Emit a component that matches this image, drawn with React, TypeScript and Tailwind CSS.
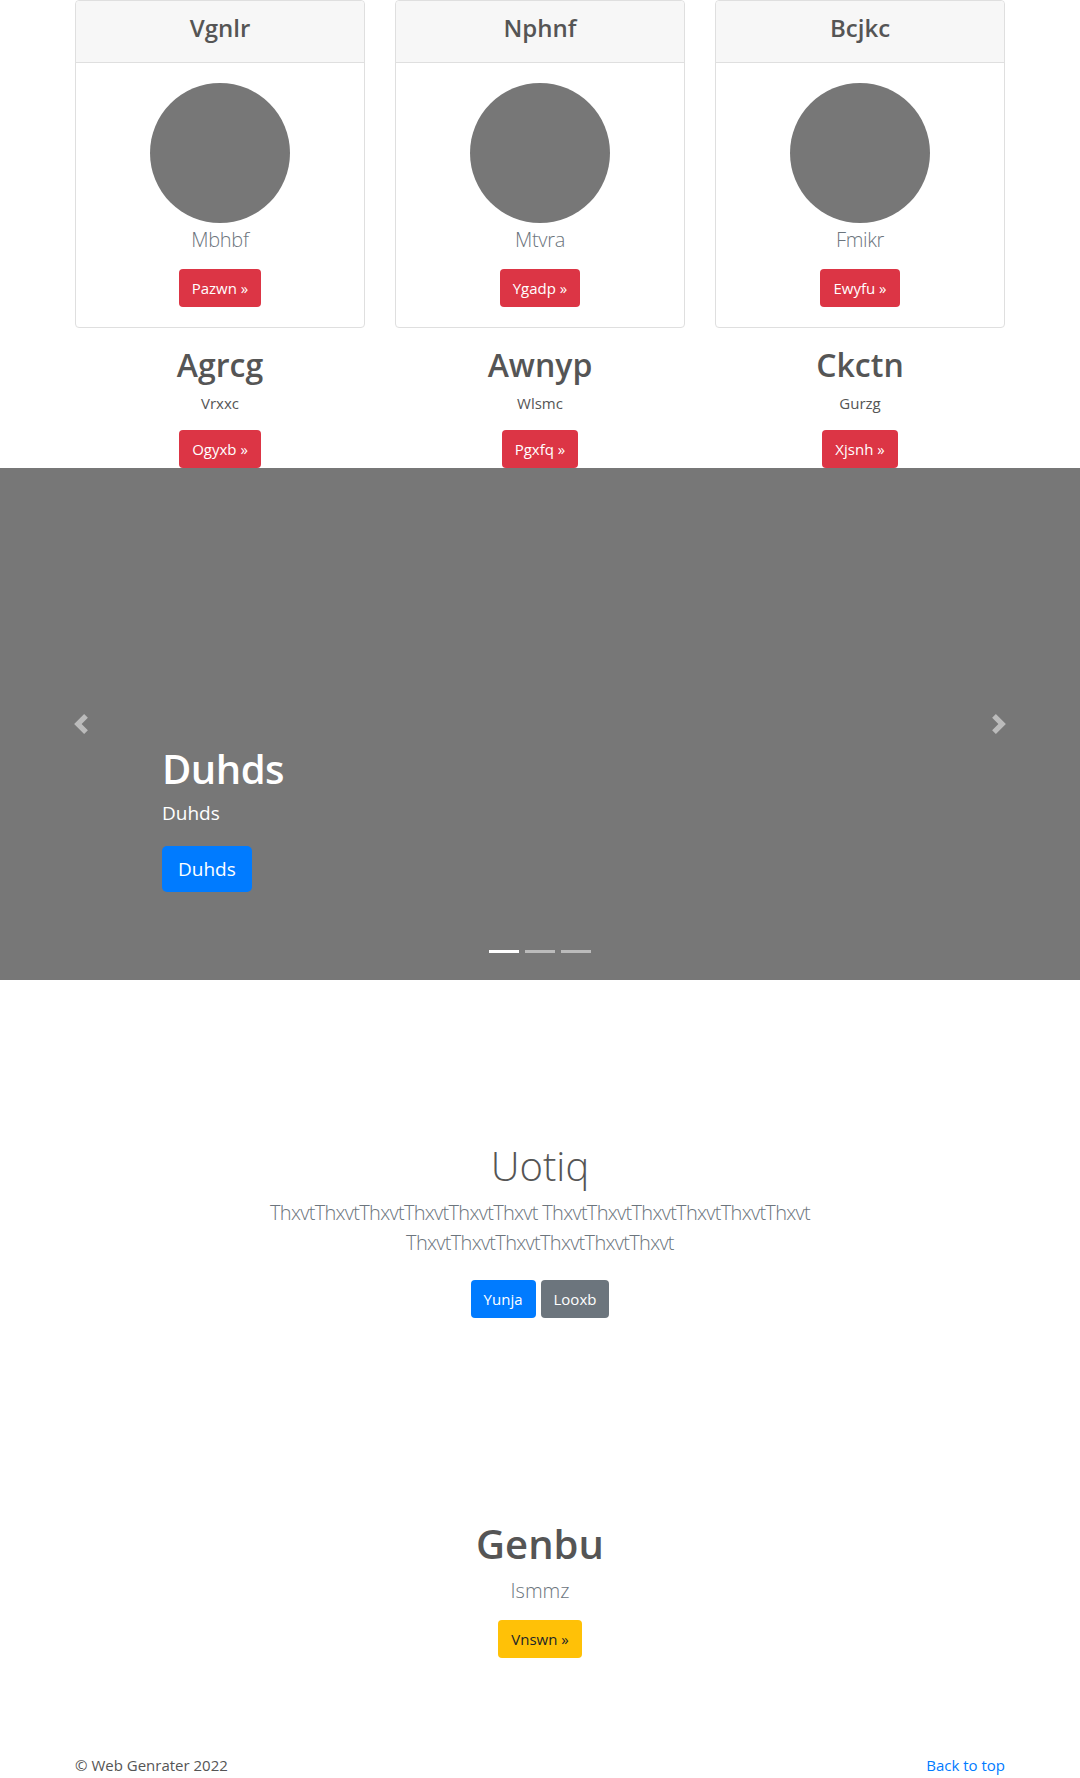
const font = { fontFamily: '"Open Sans", "Noto Sans", sans-serif' };

const cards = [
  { title: 'Vgnlr', sub: 'Mbhbf', btn: 'Pazwn' },
  { title: 'Nphnf', sub: 'Mtvra', btn: 'Ygadp' },
  { title: 'Bcjkc', sub: 'Fmikr', btn: 'Ewyfu' },
];

const cols = [
  { title: 'Agrcg', sub: 'Vrxxc', btn: 'Ogyxb' },
  { title: 'Awnyp', sub: 'Wlsmc', btn: 'Pgxfq' },
  { title: 'Ckctn', sub: 'Gurzg', btn: 'Xjsnh' },
];

const words = 'ThxvtThxvtThxvtThxvtThxvtThxvt ThxvtThxvtThxvtThxvtThxvtThxvt ThxvtThxvtThxvtThxvtThxvtThxvt';

function Btn({ children, className }: { children: React.ReactNode; className: string }) {
  return (
    <a href="#" className={`inline-block px-3 py-1.5 text-[15px] leading-6 border border-transparent rounded-[4px] ${className}`}>
      {children}
    </a>
  );
}

// bootstrap 4 carousel control glyphs
function Arrow({ dir }: { dir: 'prev' | 'next' }) {
  const d = dir === 'prev' ? 'M5.25 0l-4 4 4 4 1.5-1.5-2.5-2.5 2.5-2.5-1.5-1.5z' : 'M2.75 0l-1.5 1.5 2.5 2.5-2.5 2.5 1.5 1.5 4-4-4-4z';
  return (
    <svg width="20" height="20" viewBox="0 0 8 8" className="opacity-50">
      <path d={d} fill="#fff" />
    </svg>
  );
}

export default function App() {
  return (
    <div style={font} className="bg-white text-[#555] min-h-[1778px]">
      <div className="w-[930px] mx-auto">
        <div className="grid grid-cols-3 gap-[30px]">
          {cards.map((c) => (
            <div key={c.title} className="border border-[#dfdfdf] rounded-[4px] text-center">
              <div className="bg-[#f7f7f7] border-b border-[#dfdfdf] px-5 pt-3 pb-3 rounded-t-[4px]">
                <h4 className="text-[24px] leading-[1.2] font-semibold mt-[1px] mb-[7px]">{c.title}</h4>
              </div>
              <div className="p-5">
                <div className="w-[140px] h-[140px] rounded-full bg-[#777] mx-auto" />
                <p className="text-[20px] leading-[30px] font-light tracking-[-0.3px] text-[#6c757d] mt-[2px] mb-[14px]">{c.sub}</p>
                <Btn className="bg-[#dc3545] text-white">{c.btn} »</Btn>
              </div>
            </div>
          ))}
        </div>

        <div className="grid grid-cols-3 gap-[30px] mt-[18px] text-center">
          {cols.map((c) => (
            <div key={c.title}>
              <h2 className="text-[32px] leading-[1.2] font-semibold mb-2">{c.title}</h2>
              <p className="text-[15px] leading-[22px] mb-4">{c.sub}</p>
              <Btn className="bg-[#dc3545] text-white">{c.btn} »</Btn>
            </div>
          ))}
        </div>
      </div>

      <div className="relative h-[512px] bg-[#777]">
        <a href="#" className="absolute left-0 top-0 bottom-0 w-[15%] flex items-center justify-center">
          <Arrow dir="prev" />
        </a>
        <a href="#" className="absolute right-0 top-0 bottom-0 w-[15%] flex items-center justify-center">
          <Arrow dir="next" />
        </a>
        <div className="absolute left-[15%] right-[15%] bottom-[88px] text-white">
          <h1 className="text-[40px] leading-[48px] font-semibold tracking-[-0.5px] mb-[5px]">Duhds</h1>
          <p className="text-[19px] leading-[30px] mb-[18px]">Duhds</p>
          <a href="#" className="inline-block px-4 py-2 text-[19px] leading-[30px] rounded-[5px] bg-[#007bff] text-white">Duhds</a>
        </div>
        <div className="absolute left-0 right-0 bottom-[27px] flex justify-center">
          <span className="w-[30px] h-[3px] mx-[3px] bg-white" />
          <span className="w-[30px] h-[3px] mx-[3px] bg-white/50" />
          <span className="w-[30px] h-[3px] mx-[3px] bg-white/50" />
        </div>
      </div>

      <section className="pt-[162px] text-center">
        <div className="max-w-[640px] mx-auto">
          <h1 className="text-[40px] leading-[48px] font-light mb-2">Uotiq</h1>
          <p className="text-[20px] leading-[30px] font-light tracking-[-0.7px] text-[#6c757d] mb-4">{words}</p>
          <div className="flex justify-center gap-[5px] pt-[6px] pb-2">
            <Btn className="bg-[#007bff] text-white">Yunja</Btn>
            <Btn className="bg-[#6c757d] text-white">Looxb</Btn>
          </div>
        </div>
      </section>

      <section className="pt-[194px] text-center">
        <h2 className="text-[40px] leading-[48px] font-semibold mb-2">Genbu</h2>
        <p className="text-[20px] leading-[30px] font-light text-[#6c757d] mb-[14px]">Ismmz</p>
        <Btn className="bg-[#ffc107] text-[#212529]">Vnswn »</Btn>
      </section>

      <footer className="w-[930px] mx-auto mt-[95px] flex justify-between text-[15px] leading-6">
        <p>© Web Genrater 2022</p>
        <a href="#" className="text-[#007bff]">Back to top</a>
      </footer>
    </div>
  );
}
